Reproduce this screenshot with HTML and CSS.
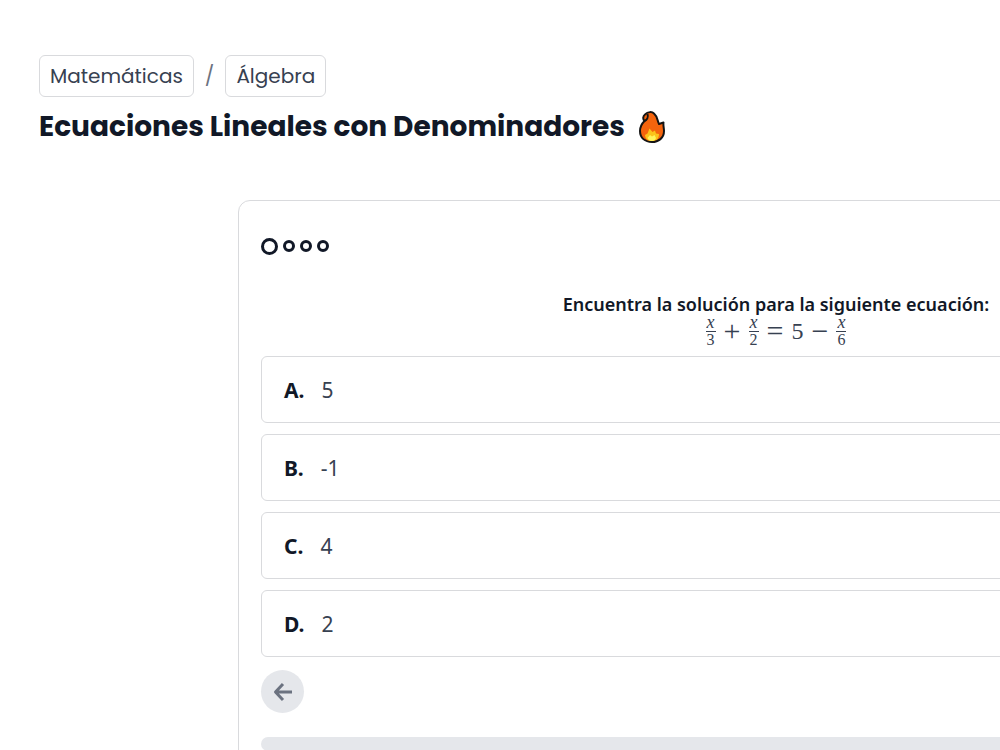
FILE: index.html
```
<!DOCTYPE html>
<html lang="es">

<head>
    <meta charset="utf-8">
    <title>Ecuaciones Lineales con Denominadores</title>
    <link rel="stylesheet" href="styles.css">
</head>

<body>
    <header class="header">
        <nav class="breadcrumb">
            <a href="#" class="tag">Matemáticas</a>
            <span class="separator">/</span>
            <a href="#" class="tag">Álgebra</a>
        </nav>
        <h1 class="title">
            Ecuaciones Lineales con Denominadores
            <svg class="flame" width="26" height="32" viewBox="0 0 26 32" aria-hidden="true">
                <path d="M6 3.500C9 .5 13 .5 15 2.500C18.500 5.500 18 9 20 13L24.500 11.500C24 14 25 17 25 20C25 27 19.500 31 13 31C6 31 1 27 1 20C1 16 2.500 13 5.500 10C3.500 8 4 5 6 3.500Z" fill="#f4640d" stroke="#141414" stroke-width="2" stroke-linejoin="round" />
                <path d="M5.500 10C8 9 9.500 6 8.500 3" fill="none" stroke="#141414" stroke-width="2" />
                <path d="M6 24L8.500 22.500L10.500 17.500L13.500 21L16 19.500L17 22.500L20 23C20 28 17 30 13 30C9 30 6.500 28 6 24Z" fill="#fbc21a" />
                <path d="M8.500 27L11 24L13 25.500L15.500 24L17 27C16.500 29 15 30 13 30C10.500 30 9.500 29 8.500 27Z" fill="#fff35c" />
            </svg>
        </h1>
    </header>

    <main class="card">
        <div class="steps">
            <span class="step step-current"></span>
            <span class="step"></span>
            <span class="step"></span>
            <span class="step"></span>
        </div>

        <h2 class="question">Encuentra la solución para la siguiente ecuación:</h2>
        <div class="equation">
            <span class="fraction"><i>x</i><span class="denominator">3</span></span>
            <span class="operator">+</span>
            <span class="fraction"><i>x</i><span class="denominator">2</span></span>
            <span class="operator">=</span>
            <span class="number">5</span>
            <span class="operator">−</span>
            <span class="fraction"><i>x</i><span class="denominator">6</span></span>
        </div>

        <div class="options">
            <button class="option"><b>A.</b><span>5</span></button>
            <button class="option"><b>B.</b><span>-1</span></button>
            <button class="option"><b>C.</b><span>4</span></button>
            <button class="option"><b>D.</b><span>2</span></button>
        </div>

        <button class="back" aria-label="Anterior">
            <svg width="20" height="20" viewBox="0 0 20 20" fill="none" stroke="currentColor" stroke-width="3">
                <path d="M19 10H3M10 2L2.500 10L10 18" stroke-linejoin="round" />
            </svg>
        </button>
        <div class="progress"></div>
    </main>
</body>

</html>
```

FILE: styles.css
```
:root {
    --text: #111827;
    --text-soft: #374151;
    --muted: #6b7280;
    --border: #d9dadd;
    --fill: #e5e7eb;
}

* {
    margin: 0;
    padding: 0;
    box-sizing: border-box;
}

body {
    padding: 55px 39px 0;
    font-family: 'Segoe UI', 'Noto Sans', sans-serif;
    color: var(--text);
    background: white;
    overflow: hidden;
}

.breadcrumb {
    display: flex;
    align-items: center;
    gap: 11px;
    font-family: Poppins, Inter, sans-serif;
    font-size: 20px;
    line-height: 28px;
}

.tag {
    padding: 6px 10px;
    border: 1px solid var(--border);
    border-radius: 6px;
    color: var(--text-soft);
    text-decoration: none;
}

.separator {
    color: var(--muted);
}

.title {
    display: flex;
    align-items: center;
    gap: 14px;
    margin-top: 10px;
    font-family: Poppins, Inter, sans-serif;
    font-size: 28px;
    font-weight: 700;
    line-height: 40px;
}

/* the card is wider than narrow windows and runs off the right side */
.card {
    min-width: 1076px;
    margin: 53px 0 0 199px;
    padding: 36px 22px 24px;
    border: 1px solid var(--border);
    border-radius: 12px;
}

.steps {
    display: flex;
    align-items: center;
    gap: 5px;
    height: 18px;
}

.step {
    width: 12px;
    height: 12px;
    border: 3px solid var(--text);
    border-radius: 50%;
}

.step-current {
    width: 17px;
    height: 17px;
}

.question {
    margin-top: 36px;
    font-size: 18px;
    font-weight: 600;
    line-height: 26px;
    text-align: center;
}

.equation {
    display: flex;
    justify-content: center;
    align-items: center;
    gap: 8px;
    height: 28px;
    font-family: 'Liberation Serif', serif;
    font-size: 24px;
    line-height: 28px;
    color: var(--text-soft);
}

.operator {
    font-size: 30px;
}

.fraction {
    display: flex;
    flex-direction: column;
    align-items: center;
    font-size: 16px;
    line-height: 14px;
}

.fraction i {
    font-size: 18px;
    line-height: 13px;
    padding-bottom: 2px;
}

.denominator {
    padding: 1px 1px 0;
    border-top: 1px solid var(--text-soft);
}

.options {
    display: flex;
    flex-direction: column;
    gap: 11px;
    margin-top: 11px;
}

.option {
    display: flex;
    align-items: center;
    gap: 17px;
    padding: 18px 22px 16px;
    border: 1px solid var(--border);
    border-radius: 6px;
    background: white;
    font-family: inherit;
    font-size: 21px;
    line-height: 31px;
    color: var(--text-soft);
    cursor: pointer;
}

.option b {
    color: var(--text);
}

.back {
    display: flex;
    align-items: center;
    justify-content: center;
    width: 43px;
    height: 43px;
    margin-top: 13px;
    border: none;
    border-radius: 50%;
    background: var(--fill);
    color: var(--muted);
    cursor: pointer;
}

.progress {
    height: 14px;
    margin-top: 24px;
    border-radius: 7px;
    background: var(--fill);
}
```
